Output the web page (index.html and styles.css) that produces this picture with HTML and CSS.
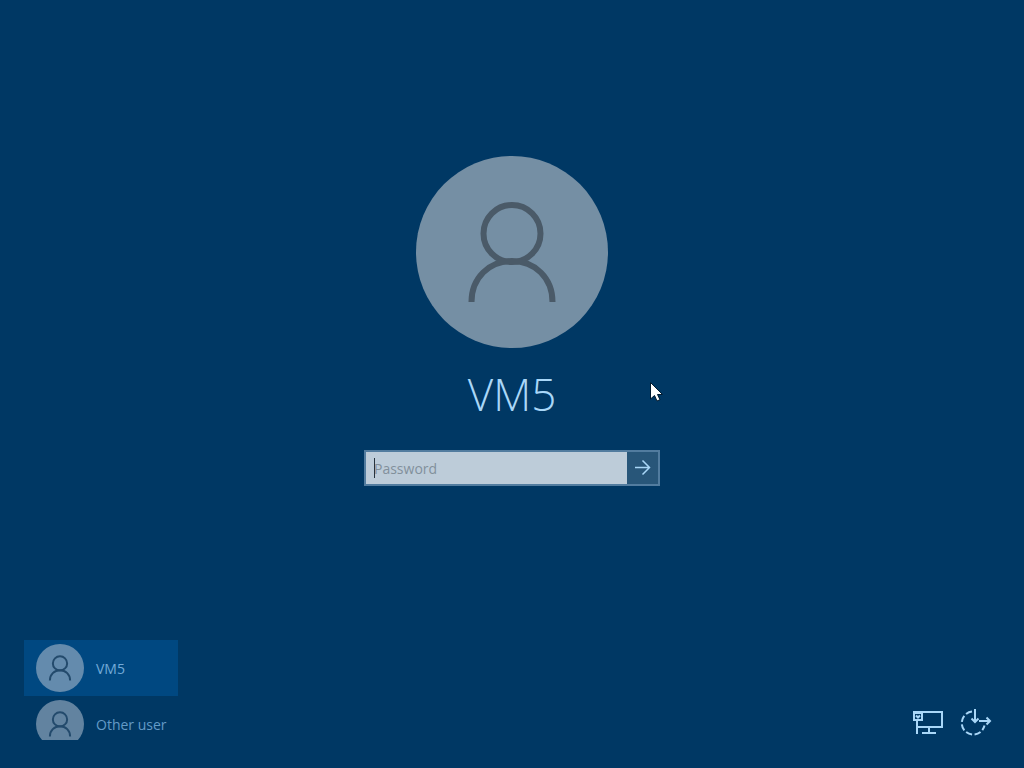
FILE: index.html
```
<!DOCTYPE html>
<html lang="en">
<head>
<meta charset="utf-8">
<title>Sign in</title>
<link rel="stylesheet" href="styles.css">
</head>
<body>
<svg class="defs" width="0" height="0" aria-hidden="true">
  <symbol id="person" viewBox="0 0 192 192">
    <circle cx="96" cy="77.500" r="28.500"/>
    <path d="M55.500 146C55.500 122 73 105 96 105S136.500 122 136.500 146"/>
  </symbol>
</svg>
<div class="screen">
  <main class="login">
    <div class="avatar avatar-large"><svg class="person" aria-hidden="true"><use href="#person"/></svg></div>
    <h1 class="name">VM5</h1>
    <form class="password-form">
      <div class="field">
        <input class="password" type="password" placeholder="Password" aria-label="Password">
        <span class="caret"></span>
      </div>
      <button class="submit" type="button" aria-label="Submit">
        <svg width="32" height="32" viewBox="0 0 32 32" aria-hidden="true"><path d="M8 15.500H22.500M15.500 8.500L22.500 15.500L15.500 22.500"/></svg>
      </button>
    </form>
  </main>
  <footer class="bottom">
    <div class="users">
      <button class="user selected" type="button"><span class="avatar avatar-small"><svg class="person" aria-hidden="true"><use href="#person"/></svg></span><span>VM5</span></button>
      <button class="user" type="button"><span class="avatar avatar-small"><svg class="person" aria-hidden="true"><use href="#person"/></svg></span><span>Other user</span></button>
    </div>
    <div class="tools">
      <button class="tool" type="button" aria-label="Network">
        <svg width="32" height="32" viewBox="0 0 32 32" aria-hidden="true">
          <path d="M10 5H30V20H5M17 20V26M10 26H24M5 13V27"/>
          <path d="M2 5H10V13H2ZM2 6H10M4 8.500L6 10.500L8 8.500"/>
        </svg>
      </button>
      <button class="tool" type="button" aria-label="Ease of access">
        <svg width="32" height="32" viewBox="0 0 32 32" aria-hidden="true">
          <path stroke-dasharray="6.500 2.500" d="M12 4.600A11.500 11.500 0 1 0 24.500 18.500"/>
          <path d="M15 2V14M11.500 11.500L15 15L18.500 11.500M19 14H30M26.500 10.500L30 14L26.500 17.500"/>
        </svg>
      </button>
    </div>
  </footer>
  <svg class="pointer" width="14" height="21" viewBox="0 0 14 21" aria-hidden="true"><path d="M0.500 0.500V17L4.500 13.500L7 19L10 17.700L7.500 12.500H12.500Z"/></svg>
</div>
</body>
</html>
```
FILE: styles.css
```
* { box-sizing: border-box; }
body { margin: 0; background: #003864; font-family: "Open Sans", "Noto Sans", sans-serif; }
button { font: inherit; border: 0; padding: 0; background: none; color: inherit; }
.defs { position: absolute; }
.screen { position: relative; min-height: 100vh; display: flex; flex-direction: column; }
.login { flex: 1; display: flex; flex-direction: column; align-items: center; padding: 156px 24px 24px; }
.avatar { display: block; flex: none; border-radius: 50%; background: #758fa4; }
.avatar-large { width: 192px; height: 192px; }
.avatar-small { width: 48px; height: 48px; background: #648bad; }
.person { display: block; width: 100%; height: 100%; fill: none; stroke: #4a5a68; stroke-width: 6; }
.avatar-small .person { stroke: #234a6c; stroke-width: 8; }
.name { margin: 14px 0 24px; font-size: 44px; line-height: 64px; font-weight: 300; color: #a9d7f8; }
.password-form { display: flex; width: 100%; max-width: 296px; height: 36px; border: 2px solid #527c9f; }
.field { position: relative; flex: 1; display: flex; }
.password { width: 100%; min-width: 0; border: 0; border-radius: 0; outline: 0; padding: 0 8px; background: #bdccd9; color: #26333e; font: 14px "Open Sans", "Noto Sans", sans-serif; }
.password::placeholder { color: #82909c; opacity: 1; }
.caret { position: absolute; left: 8px; top: 6px; width: 1px; height: 20px; background: #26333e; }
.submit { width: 31px; background: #285679; display: flex; align-items: center; justify-content: center; overflow: hidden; }
.submit svg { flex: none; fill: none; stroke: #a9d7f8; stroke-width: 1.500; }
.bottom { display: flex; justify-content: space-between; align-items: flex-end; padding: 0 32px 28px 24px; }
.users { height: 100px; overflow: hidden; }
.user { display: flex; align-items: center; gap: 12px; width: 154px; height: 56px; padding: 0 12px; font-size: 14px; white-space: nowrap; color: #649bc7; }
.selected { background: #004881; color: #72aad8; }
.user:not(.selected) .avatar { background: #6283a0; }
.tools { display: flex; gap: 16px; padding-bottom: 1px; }
.tool { width: 32px; height: 32px; }
.tool svg { display: block; fill: none; stroke: #a9d7f8; stroke-width: 2; }
.pointer { position: absolute; left: 650px; top: 382px; fill: #fff; stroke: #001a30; stroke-width: 1; }
```
